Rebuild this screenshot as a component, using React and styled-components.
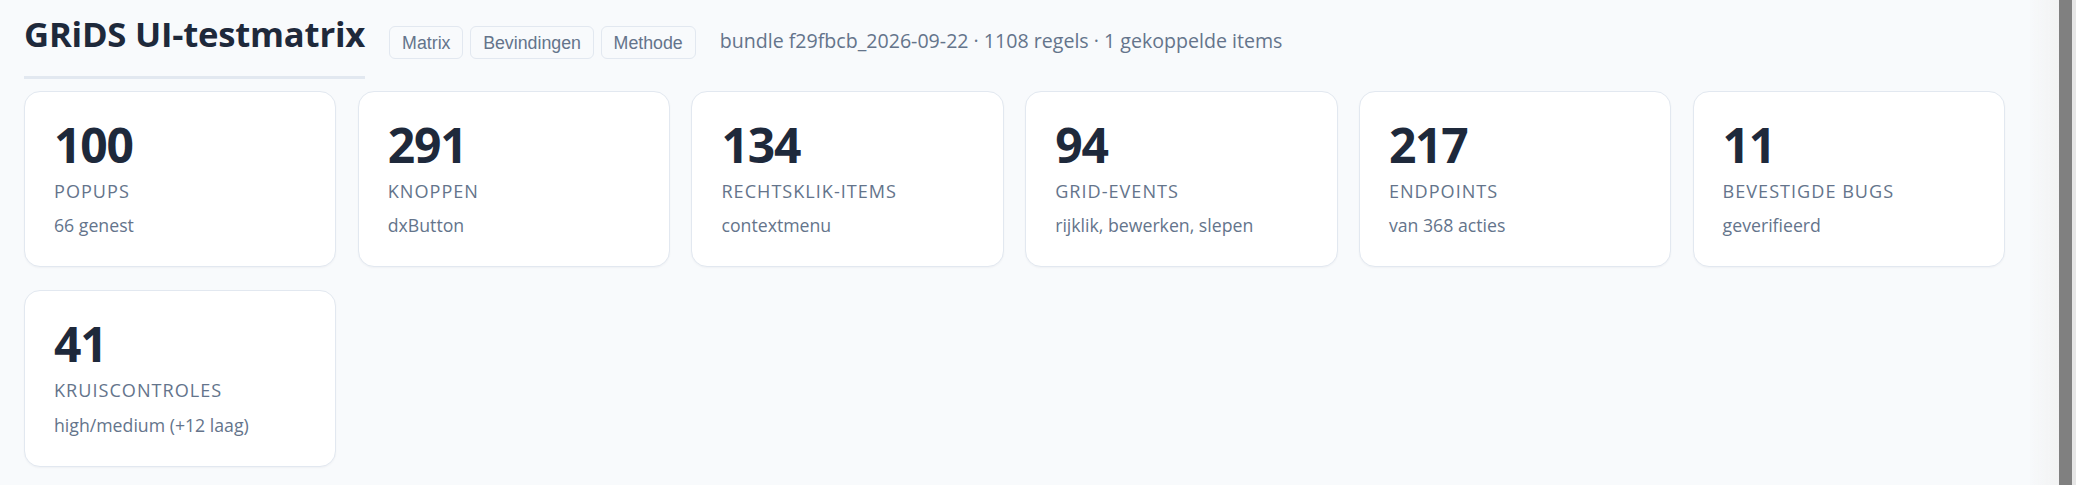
import React from 'react'
import styled, { createGlobalStyle } from 'styled-components'

const GlobalStyle = createGlobalStyle`
  html, body {
    margin: 0;
    padding: 0;
    background: #f8fafc;
  }
`

const stats = [
  { value: 100, label: 'Popups', sub: '66 genest' },
  { value: 291, label: 'Knoppen', sub: 'dxButton' },
  { value: 134, label: 'Rechtsklik-items', sub: 'contextmenu' },
  { value: 94, label: 'Grid-events', sub: 'rijklik, bewerken, slepen' },
  { value: 217, label: 'Endpoints', sub: 'van 368 acties' },
  { value: 11, label: 'Bevestigde bugs', sub: 'geverifieerd' },
  { value: 41, label: 'Kruiscontroles', sub: 'high/medium (+12 laag)' },
]

const tabs = ['Matrix', 'Bevindingen', 'Methode']

const App = () => {
  return (
    <>
      <GlobalStyle />
      <Page>
        <Header>
          <Title>GRiDS UI-testmatrix</Title>
          <Tabs>
            {tabs.map((t) => (
              <Tab key={t}>{t}</Tab>
            ))}
          </Tabs>
          <Meta>bundle f29fbcb_2026-09-22 · 1108 regels · 1 gekoppelde items</Meta>
        </Header>
        <Grid>
          {stats.map((s) => (
            <Card key={s.label}>
              <Value>{s.value}</Value>
              <Label>{s.label}</Label>
              <Sub>{s.sub}</Sub>
            </Card>
          ))}
        </Grid>
      </Page>
      {/* window scrollbar as it shows in the capture */}
      <ScrollRail>
        <ScrollThumb />
      </ScrollRail>
    </>
  )
}

const Page = styled.main`
  padding: 13px 24px 12px;
  font-family: "Open Sans", "Noto Sans", sans-serif;
  color: #1e293b;
`

const Header = styled.header`
  display: flex;
  align-items: flex-start;
  gap: 24px;
  margin-bottom: 12px;
`

const Title = styled.h1`
  margin: 0;
  font-size: 34.67px;
  font-weight: 700;
  line-height: 1.2;
  letter-spacing: -0.22px;
  color: #1e293b;
  padding-bottom: 21.33px;
  border-bottom: 3px solid #e2e8f0;
`

const Tabs = styled.nav`
  display: flex;
  gap: 6.67px;
  margin-top: 13.2px;
`

const Tab = styled.button`
  font-family: "Liberation Sans", Arial, sans-serif;
  font-size: 17.78px;
  line-height: 1.149;
  color: #64748b;
  background: #f8fafc;
  border: 1px solid #e2e8f0;
  border-radius: 6px;
  padding: 5.33px 12px;
  cursor: pointer;
`

const Meta = styled.span`
  margin-top: 15.4px;
  font-size: 19.6px;
  line-height: 1.362;
  color: #64748b;
`

const Grid = styled.section`
  display: grid;
  grid-template-columns: repeat(6, 312.4px);
  column-gap: 21.33px;
  row-gap: 23px;
`

const Card = styled.div`
  background: #ffffff;
  border: 1px solid #e2e8f0;
  border-radius: 16px;
  padding: 29px;
  box-shadow: 0 1px 2px rgba(15, 23, 42, 0.04);
`

const Value = styled.div`
  font-size: 48px;
  font-weight: 700;
  line-height: 1;
  letter-spacing: -1.2px;
  color: #1e293b;
`

const Label = styled.div`
  margin-top: 10px;
  font-size: 18.1px;
  line-height: 25.2px;
  letter-spacing: 1px;
  text-transform: uppercase;
  color: #64748b;
`

const Sub = styled.div`
  margin-top: 9px;
  font-size: 17.7px;
  line-height: 24.3px;
  color: #64748b;
`

const ScrollRail = styled.div`
  position: fixed;
  top: 0;
  right: 0;
  bottom: 0;
  width: 17px;
  display: flex;
  background: #e6e6e6;
  &::before {
    content: '';
    position: absolute;
    top: 0;
    bottom: 0;
    right: 17px;
    width: 29px;
    background: linear-gradient(to right, rgba(240, 240, 240, 0), rgba(240, 240, 240, 0.8));
  }
`

const ScrollThumb = styled.div`
  width: 13px;
  background: #808080;
`

export default App
